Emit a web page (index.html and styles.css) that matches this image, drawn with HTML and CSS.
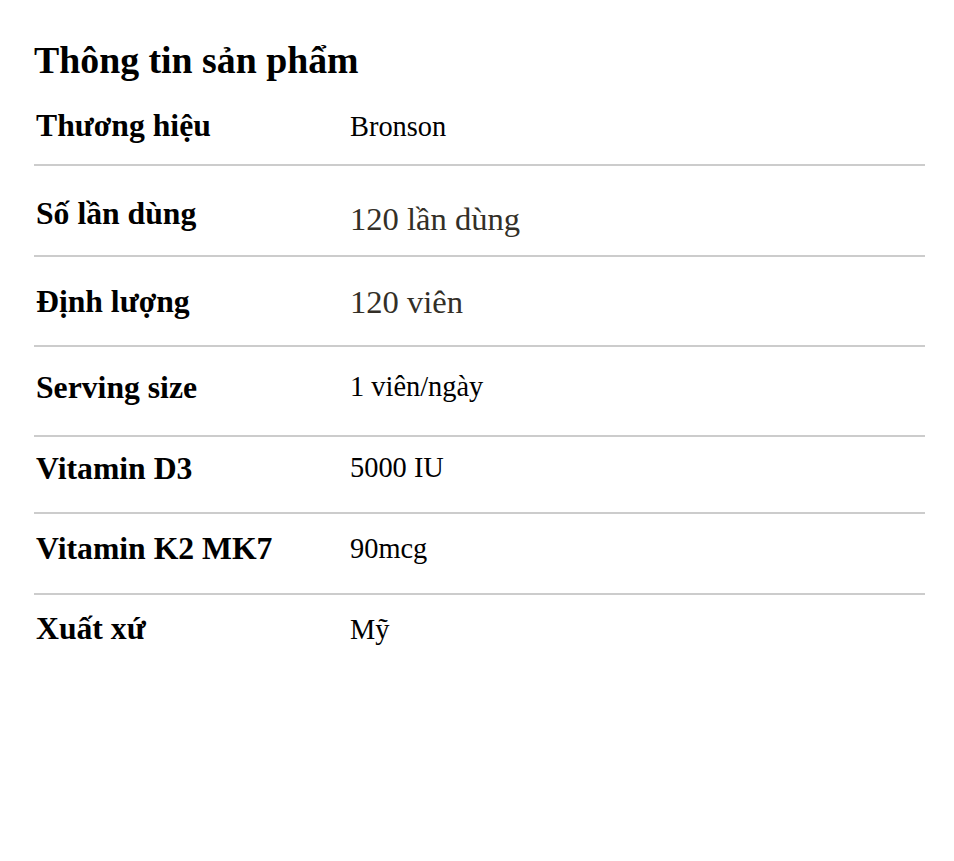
FILE: index.html
```html
<!DOCTYPE html>
<html lang="vi">
<head>
<meta charset="utf-8">
<title>Thông tin sản phẩm</title>
<link rel="stylesheet" href="styles.css">
</head>
<body>
<div class="spec">
  <h1 class="spec-title">Thông tin sản phẩm</h1>
  <div class="spec-row r1">
    <div class="spec-label">Thương hiệu</div>
    <div class="spec-value">Bronson</div>
  </div>
  <div class="spec-row r2">
    <div class="spec-label low">Số lần dùng</div>
    <div class="spec-value big shift">120 lần dùng</div>
  </div>
  <div class="spec-row r3">
    <div class="spec-label">Định lượng</div>
    <div class="spec-value big">120 viên</div>
  </div>
  <div class="spec-row r4">
    <div class="spec-label low">Serving size</div>
    <div class="spec-value">1 viên/ngày</div>
  </div>
  <div class="spec-row r5">
    <div class="spec-label low">Vitamin D3</div>
    <div class="spec-value">5000 IU</div>
  </div>
  <div class="spec-row r6">
    <div class="spec-label low">Vitamin K2 MK7</div>
    <div class="spec-value lower">90mcg</div>
  </div>
  <div class="spec-row r7 last">
    <div class="spec-label low">Xuất xứ</div>
    <div class="spec-value lowest">Mỹ</div>
  </div>
</div>
</body>
</html>
```

FILE: styles.css
```css
html, body {
  margin: 0;
  padding: 0;
  background: #ffffff;
}

body {
  font-family: "Liberation Serif", "Times New Roman", serif;
  color: #000;
}

.spec {
  width: 891px;
  margin-left: 34px;
  padding-top: 38px;
}

.spec-title {
  margin: 0 0 26px 0;
  font-size: 37.8px;
  line-height: 44px;
  font-weight: bold;
}

.spec-row {
  display: flex;
  align-items: flex-start;
  border-bottom: 2px solid #cccccc;
  padding-left: 2px;
}

.spec-row.last {
  border-bottom: none;
}

.spec-label {
  width: 314px;
  flex: none;
  font-size: 31.7px;
  line-height: 36px;
  font-weight: bold;
}

.spec-label.low {
  padding-top: 2px;
}

.spec-value {
  font-size: 28.4px;
  line-height: 36px;
  padding-top: 1px;
}

.spec-value.lower {
  padding-top: 2px;
}

.spec-value.lowest {
  padding-top: 3px;
}

.spec-value.big {
  font-size: 32.6px;
  color: #332f27;
  padding-top: 0;
}

.spec-value.shift {
  padding-top: 7px;
}

.r1 { padding-top: 0; height: 56px; }
.r2 { padding-top: 28px; height: 61px; }
.r3 { padding-top: 27px; height: 61px; }
.r4 { padding-top: 21px; height: 67px; }
.r5 { padding-top: 12px; height: 63px; }
.r6 { padding-top: 15px; height: 64px; }
.r7 { padding-top: 14px; height: 60px; }
```
